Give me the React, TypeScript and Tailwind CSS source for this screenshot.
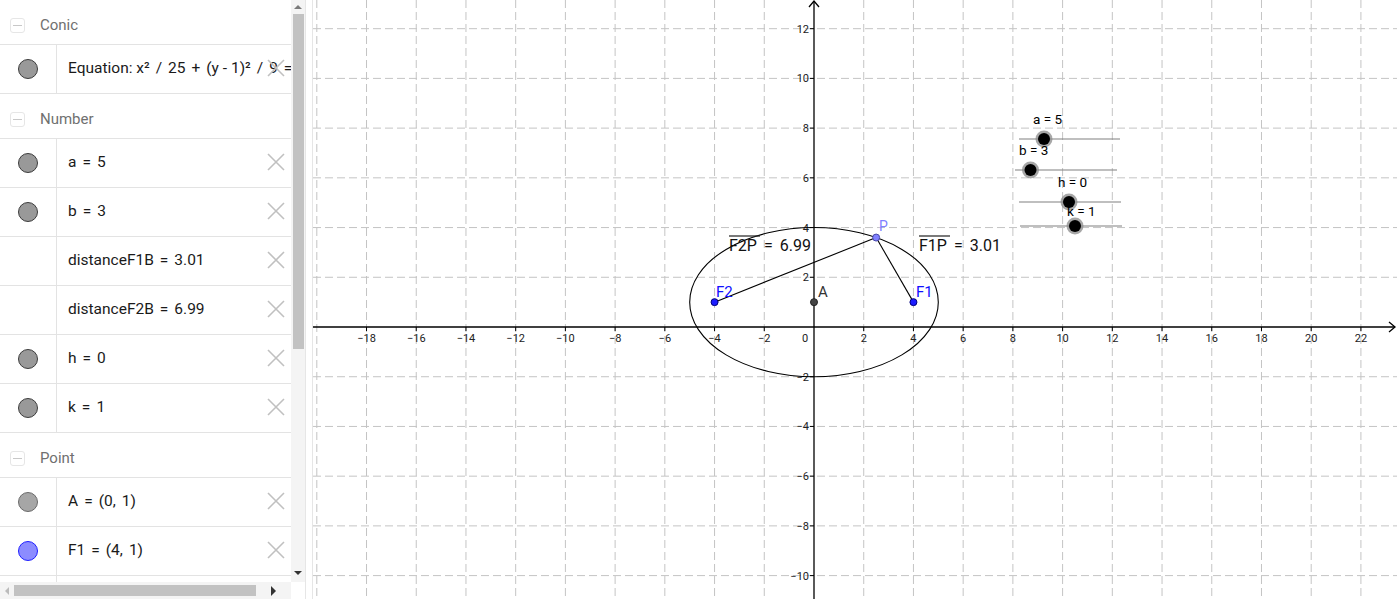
import React from "react";

const S = 24.86;
const OX = 814;
const OY = 327;
const px = (x: number) => OX + x * S;
const py = (y: number) => OY - y * S;

type Row = {
  text: string;
  dot?: "gray" | "light" | "blue";
};

type Group = { title: string; rows: Row[] };

const groups: Group[] = [
  { title: "Conic", rows: [{ text: "Equation: x² / 25 + (y - 1)² / 9 = 1", dot: "gray" }] },
  {
    title: "Number",
    rows: [
      { text: "a = 5", dot: "gray" },
      { text: "b = 3", dot: "gray" },
      { text: "distanceF1B = 3.01" },
      { text: "distanceF2B = 6.99" },
      { text: "h = 0", dot: "gray" },
      { text: "k = 1", dot: "gray" },
    ],
  },
  {
    title: "Point",
    rows: [
      { text: "A = (0, 1)", dot: "light" },
      { text: "F1 = (4, 1)", dot: "blue" },
      { text: "F2 = (-4, 1)", dot: "blue" },
    ],
  },
];

// spread the math operators a little, like the algebra view renders them
function MathText({ text }: { text: string }) {
  const parts = text.split(/( = | \+ | \/ |, )/);
  return (
    <>
      {parts.map((p, i) => {
        if (p === " = " || p === " + ")
          return (
            <span key={i} className="px-[6px]">
              {p.trim()}
            </span>
          );
        if (p === " / ")
          return (
            <span key={i} className="px-[6px]">
              /
            </span>
          );
        if (p === ", ")
          return (
            <span key={i} className="pr-[6px]">
              ,
            </span>
          );
        return <span key={i}>{p}</span>;
      })}
    </>
  );
}

function Dot({ kind }: { kind?: Row["dot"] }) {
  if (!kind) return null;
  const cls =
    kind === "blue"
      ? "bg-[#8c8cff] border-[#2020ff]"
      : kind === "light"
        ? "bg-[#a6a6a6] border-[#6a6a6a]"
        : "bg-[#999999] border-[#3c3c3c]";
  return <div className={`w-5 h-5 rounded-full border ${cls}`} />;
}

function Cross() {
  return (
    <svg width="18" height="18" viewBox="0 0 18 18" className="text-[#c0c0c0]">
      <path d="M1 1 L17 17 M17 1 L1 17" stroke="currentColor" strokeWidth="1.6" />
    </svg>
  );
}

function AlgebraView() {
  return (
    <div className="relative w-[291px] h-[582px] overflow-hidden bg-white">
      {groups.map((g) => (
        <div key={g.title}>
          <div className="h-[45px] flex items-center pt-[6px] border-b border-[#e3e3e3]">
            <div className="ml-[10px] w-[15px] h-[15px] rounded-[3px] border border-[#e6e6e6] flex items-center justify-center">
              <div className="w-[9px] h-px bg-[#c8c8c8]" />
            </div>
            <span className="ml-[15px] text-[15px] text-[#707070]">{g.title}</span>
          </div>
          {g.rows.map((r) => (
            <div key={r.text} className="relative h-[49px] flex border-b border-[#e3e3e3]">
              <div className="w-[57px] shrink-0 border-r border-[#e3e3e3] flex items-center justify-center">
                <Dot kind={r.dot} />
              </div>
              <div className="flex-1 overflow-hidden whitespace-nowrap flex items-center pl-[11px] text-[15.5px] text-[#1a1a1a]">
                <MathText text={r.text} />
              </div>
              <div className="absolute right-[6px] top-[14px]">
                <Cross />
              </div>
            </div>
          ))}
        </div>
      ))}
    </div>
  );
}

function VScroll() {
  return (
    <div className="w-[14px] h-[582px] bg-[#f4f4f4] flex flex-col items-center">
      <div className="h-[14px] flex items-center justify-center">
        <div className="w-0 h-0 border-l-[4px] border-r-[4px] border-b-[4px] border-l-transparent border-r-transparent border-b-[#7a7a7a]" />
      </div>
      <div className="w-[11px] h-[335px] bg-[#c2c2c2]" />
      <div className="flex-1" />
      <div className="h-[14px] flex items-center justify-center mb-[2px]">
        <div className="w-0 h-0 border-l-[4px] border-r-[4px] border-t-[4px] border-l-transparent border-r-transparent border-t-[#333]" />
      </div>
    </div>
  );
}

function HScroll() {
  return (
    <div className="flex h-[17px]">
      <div className="w-[291px] bg-[#f4f4f4] flex items-center">
        <div className="w-[14px] flex items-center justify-center">
          <div className="w-0 h-0 border-t-[4px] border-b-[4px] border-r-[4px] border-t-transparent border-b-transparent border-r-[#bbbbbb]" />
        </div>
        <div className="w-[242px] h-[11px] bg-[#c2c2c2]" />
        <div className="flex-1 flex items-center justify-center">
          <div className="w-0 h-0 border-t-[5px] border-b-[5px] border-l-[5px] border-t-transparent border-b-transparent border-l-[#333]" />
        </div>
      </div>
      <div className="w-[14px] bg-white" />
    </div>
  );
}

const font = "Roboto, 'Liberation Sans', sans-serif";

function Graphics() {
  const vx: number[] = [];
  for (let k = -20; k <= 24; k += 2) if (k !== 0) vx.push(k);
  const hy: number[] = [];
  for (let k = -12; k <= 12; k += 2) if (k !== 0) hy.push(k);
  const xl: number[] = [];
  for (let k = -18; k <= 22; k += 2) if (k !== 0) xl.push(k);
  const yl: number[] = [];
  for (let k = -10; k <= 12; k += 2) if (k !== 0) yl.push(k);

  const P = { x: px(2.5), y: py(1 + 3 * Math.sqrt(0.75)) };
  const F1 = { x: px(4), y: py(1) };
  const F2 = { x: px(-4), y: py(1) };
  const A = { x: px(0), y: py(1) };

  const sliders = [
    { label: "a = 5", lx: 1033, ly: 124, x1: 1019, x2: 1120, y: 139, p: 1044 },
    { label: "b = 3", lx: 1019, ly: 155, x1: 1015, x2: 1117, y: 170, p: 1030.5 },
    { label: "h = 0", lx: 1058, ly: 187, x1: 1019, x2: 1121, y: 202, p: 1069 },
    { label: "k = 1", lx: 1067, ly: 216, x1: 1020, x2: 1122, y: 226, p: 1075 },
  ];

  return (
    <svg width="1084" height="599" viewBox="313 0 1084 599" style={{ fontFamily: font }}>
      <g stroke="#c4c4c4" strokeWidth="1" strokeDasharray="8 4">
        {vx.map((k) => (
          <line key={"v" + k} x1={px(k)} y1={0} x2={px(k)} y2={599} />
        ))}
        {hy.map((k) => (
          <line key={"h" + k} x1={313} y1={py(k)} x2={1397} y2={py(k)} />
        ))}
      </g>

      <g stroke="#000" strokeWidth="1.3" fill="none">
        <line x1={313} y1={OY} x2={1395} y2={OY} />
        <path d={`M1389 ${OY - 5} L1395 ${OY} L1389 ${OY + 5}`} />
        <line x1={OX} y1={599} x2={OX} y2={1} />
        <path d={`M${OX - 5} 7 L${OX} 1 L${OX + 5} 7`} />
      </g>
      <g stroke="#000" strokeWidth="1">
        {xl.map((k) => (
          <line key={"tx" + k} x1={px(k)} y1={OY} x2={px(k)} y2={OY + 4} />
        ))}
        {yl.map((k) => (
          <line key={"ty" + k} x1={OX - 4} y1={py(k)} x2={OX} y2={py(k)} />
        ))}
      </g>
      <g fontSize="11" fill="#222">
        {xl.map((k) => (
          <text key={"lx" + k} x={px(k)} y={342} textAnchor="middle">
            {k < 0 ? "−" + -k : k}
          </text>
        ))}
        <text x={805} y={342} textAnchor="middle">0</text>
        {yl.map((k) => (
          <text key={"ly" + k} x={809} y={py(k) + 4} textAnchor="end">
            {k < 0 ? "−" + -k : k}
          </text>
        ))}
      </g>

      <ellipse cx={px(0)} cy={py(1)} rx={5 * S} ry={3 * S} fill="none" stroke="#000" strokeWidth="1.1" />
      <g stroke="#000" strokeWidth="1.1">
        <line x1={F2.x} y1={F2.y} x2={P.x} y2={P.y} />
        <line x1={F1.x} y1={F1.y} x2={P.x} y2={P.y} />
      </g>

      <circle cx={A.x} cy={A.y} r={3.5} fill="#444" stroke="#222" />
      <circle cx={F1.x} cy={F1.y} r={3.5} fill="#1c1cff" stroke="#00007a" />
      <circle cx={F2.x} cy={F2.y} r={3.5} fill="#1c1cff" stroke="#00007a" />
      <circle cx={P.x} cy={P.y} r={3.5} fill="#8080ff" stroke="#4848a8" />

      <g fontSize="15">
        <text x={818} y={297} fill="#333">A</text>
        <text x={916} y={297} fill="#1010ff">F1</text>
        <text x={716} y={297} fill="#1010ff">F2</text>
        <text x={879} y={231} fill="#8080ff" fontSize="14">P</text>
      </g>

      <g fontSize="16" fill="#111">
        <line x1={729} y1={236} x2={760} y2={236} stroke="#222" strokeWidth="1.2" />
        <text x={729} y={251}>
          <tspan>F2P</tspan>
          <tspan dx="7">=</tspan>
          <tspan dx="7">6.99</tspan>
        </text>
        <line x1={919} y1={236} x2={950} y2={236} stroke="#222" strokeWidth="1.2" />
        <text x={919} y={251}>
          <tspan>F1P</tspan>
          <tspan dx="7">=</tspan>
          <tspan dx="7">3.01</tspan>
        </text>
      </g>

      {sliders.map((s) => (
        <g key={s.label}>
          <line x1={s.x1} y1={s.y} x2={s.x2} y2={s.y} stroke="#808080" strokeWidth="1.1" />
          <circle cx={s.p} cy={s.y} r={8.5} fill="#8a8a8a" opacity="0.75" />
          <circle cx={s.p} cy={s.y} r={6} fill="#000" />
          <text x={s.lx} y={s.ly} fontSize="13.5" fill="#000">{s.label}</text>
        </g>
      ))}
    </svg>
  );
}

export default function App() {
  return (
    <div className="w-[1397px] h-[599px] flex overflow-hidden bg-white" style={{ fontFamily: font }}>
      <div className="flex flex-col w-[305px] shrink-0">
        <div className="flex">
          <AlgebraView />
          <VScroll />
        </div>
        <HScroll />
      </div>
      <div className="w-[8px] shrink-0 border-l border-r border-[#e6e6e6]" />
      <Graphics />
    </div>
  );
}
